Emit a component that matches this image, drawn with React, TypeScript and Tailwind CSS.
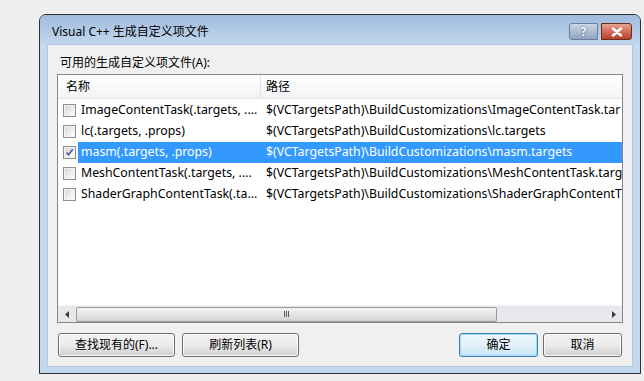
import React from "react";

const FONT = { fontFamily: '"Noto Sans", "Noto Sans CJK SC", sans-serif' };

// paths are clipped by the list's right edge in the dialog, so keep the visible part
const rows = [
  { name: "ImageContentTask(.targets, ....", path: "$(VCTargetsPath)\\BuildCustomizations\\ImageContentTask.tar", checked: false },
  { name: "lc(.targets, .props)", path: "$(VCTargetsPath)\\BuildCustomizations\\lc.targets", checked: false },
  { name: "masm(.targets, .props)", path: "$(VCTargetsPath)\\BuildCustomizations\\masm.targets", checked: true },
  { name: "MeshContentTask(.targets, ....", path: "$(VCTargetsPath)\\BuildCustomizations\\MeshContentTask.targ", checked: false },
  { name: "ShaderGraphContentTask(.ta...", path: "$(VCTargetsPath)\\BuildCustomizations\\ShaderGraphContentT", checked: false },
];

function Checkbox({ checked }: { checked: boolean }) {
  return (
    <div className="w-[13px] h-[13px] border border-[#8e8f8f] bg-[#f4f4f4] flex items-center justify-center shrink-0">
      <div className="w-[9px] h-[9px] bg-gradient-to-br from-[#d6d6d6] to-[#ffffff] flex items-center justify-center">
        {checked && (
          <svg width="9" height="9" viewBox="0 0 9 9">
            <path d="M1.5 4.5 L3.5 6.8 L7.8 1.2" fill="none" stroke="#4a5f97" strokeWidth="1.6" />
          </svg>
        )}
      </div>
    </div>
  );
}

function Button({ label, active, w }: { label: string; active?: boolean; w: string }) {
  return (
    <div
      className={`${w} h-[24px] rounded-[3px] border flex items-center justify-center text-[12px] text-black ${
        active
          ? "border-[#3c7fb1] shadow-[inset_0_0_0_1px_#9fdcf5] bg-gradient-to-b from-[#eef7fc] via-[#e2f1fa] to-[#c7e5f6]"
          : "border-[#707070] shadow-[inset_0_0_0_1px_#fbfbfb] bg-gradient-to-b from-[#f2f2f2] via-[#ebebeb] to-[#cfcfcf]"
      }`}
    >
      {label}
    </div>
  );
}

export default function App() {
  return (
    <div className="w-[644px] h-[381px] bg-[#efeff0] pl-[39px] pt-[14px] overflow-hidden" style={FONT}>
      <div className="w-[602px] h-[360px] border border-[#2b2f35] rounded-t-[7px] bg-[#c4d9ee] flex flex-col overflow-hidden">
        {/* title bar */}
        <div className="h-[29px] shrink-0 bg-gradient-to-b from-[#9fbbdc] to-[#c2d7ee] flex items-center pl-[12px] pr-[8px]">
          <span className="text-[12px] text-black mt-[5px]">Visual C++ 生成自定义项文件</span>
          <div className="ml-auto flex items-center gap-[3px] mt-[4px]">
            <div className="w-[29px] h-[17px] rounded-l-[3px] border border-[#6d7f97] bg-gradient-to-b from-[#c9d7e8] via-[#aebdd2] to-[#8ea6c7] flex items-center justify-center text-white text-[12px] font-bold leading-none [text-shadow:0_0_2px_#2d3f5a]">
              ?
            </div>
            <div className="w-[31px] h-[17px] rounded-r-[3px] border border-[#6b2b22] bg-gradient-to-b from-[#e8a493] via-[#d0705a] to-[#b83f2b] flex items-center justify-center">
              <svg width="12" height="10" viewBox="0 0 12 10">
                <path d="M2 1.5 L10 8.5 M10 1.5 L2 8.5" stroke="#ffffff" strokeWidth="2.4" strokeLinecap="round" />
              </svg>
            </div>
          </div>
        </div>
        {/* client */}
        <div className="flex-1 mx-[7px] mb-[6px] bg-[#f0f0f0] border border-[#b6c8db] flex flex-col">
          <div className="text-[12px] text-black pl-[12px] pt-[9px] h-[29px]">可用的生成自定义项文件(A):</div>
          <div className="mx-[9px] h-[249px] border border-[#828790] bg-white flex flex-col">
            <div className="h-[24px] flex text-[12px] text-black bg-gradient-to-b from-[#ffffff] to-[#f3f4f6] border-b border-[#e5e5e5]">
              <div className="w-[203px] border-r border-[#dde2e8] pl-[8px] flex items-center">名称</div>
              <div className="flex-1 pl-[5px] flex items-center">路径</div>
            </div>
            <div className="flex-1 pt-[1px] overflow-hidden">
              {rows.map((r) => (
                <div key={r.name} className="h-[21px] flex items-center text-[12.3px]">
                  <div className="w-[20px] pl-[5px] shrink-0">
                    <Checkbox checked={r.checked} />
                  </div>
                  <div className={`flex flex-1 h-full items-center ${r.checked ? "bg-[#3399ff] text-white" : "text-black"}`}>
                    <div className="w-[184px] pl-[3px] whitespace-nowrap overflow-hidden">{r.name}</div>
                    <div className="flex-1 pl-[4px] whitespace-nowrap">{r.path}</div>
                  </div>
                </div>
              ))}
            </div>
            {/* horizontal scrollbar */}
            <div className="h-[17px] bg-[#e8e8ec] flex items-center border-t border-[#f4f4f4]">
              <div className="w-[17px] h-full flex items-center justify-center">
                <svg width="4" height="7" viewBox="0 0 4 7">
                  <path d="M4 0 L0 3.5 L4 7 Z" fill="#3a3a3a" />
                </svg>
              </div>
              <div className="w-[421px] h-[15px] ml-[1px] rounded-[2px] border border-[#9a9a9a] bg-gradient-to-b from-[#f3f3f3] via-[#e5e5e5] to-[#d2d2d2] flex items-center justify-center">
                <div className="flex gap-[1px]">
                  <div className="w-[1px] h-[6px] bg-[#5a5a5a]" />
                  <div className="w-[1px] h-[6px] bg-[#5a5a5a]" />
                  <div className="w-[1px] h-[6px] bg-[#5a5a5a]" />
                </div>
              </div>
              <div className="flex-1" />
              <div className="w-[17px] h-full flex items-center justify-center">
                <svg width="4" height="7" viewBox="0 0 4 7">
                  <path d="M0 0 L4 3.5 L0 7 Z" fill="#3a3a3a" />
                </svg>
              </div>
            </div>
          </div>
          <div className="flex mt-[10px] px-[10px]">
            <Button label="查找现有的(F)..." w="w-[117px]" />
            <div className="w-[7px]" />
            <Button label="刷新列表(R)" w="w-[117px]" />
            <div className="flex-1" />
            <Button label="确定" active w="w-[79px]" />
            <div className="w-[5px]" />
            <Button label="取消" w="w-[79px]" />
          </div>
        </div>
      </div>
    </div>
  );
}
